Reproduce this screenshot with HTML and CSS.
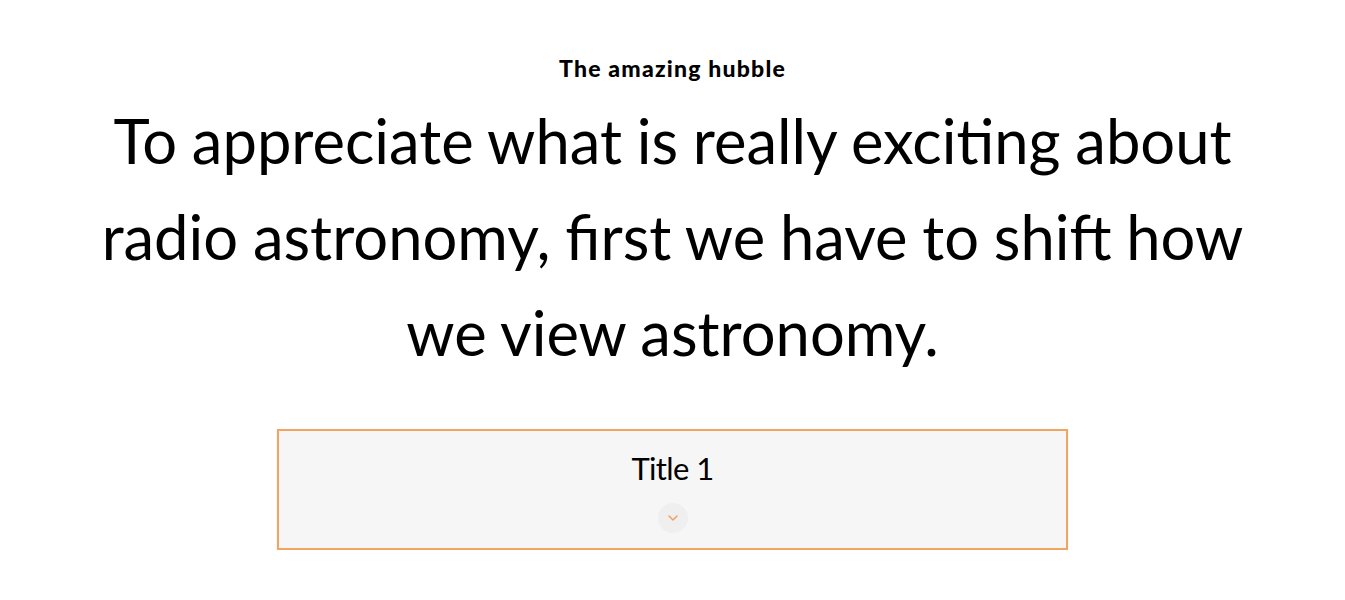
FILE: index.html
```html
<!DOCTYPE html>
<html>
<head>
<meta charset="utf-8">
<link rel="stylesheet" href="styles.css">
</head>
<body>
<section class="hero">
  <h6 class="eyebrow">The amazing hubble</h6>
  <h2 class="headline">To appreciate what is really exciting about<br>radio astronomy, first we have to shift how<br>we view astronomy.</h2>
  <div class="accordion">
    <div class="acc-item">
      <div class="acc-title">Title 1</div>
      <span class="acc-toggle">
        <svg width="10" height="6" viewBox="0 0 10 6"><path d="M1 1l4 4 4-4" fill="none" stroke="#f2a05e" stroke-width="1.5" stroke-linecap="round" stroke-linejoin="round"/></svg>
      </span>
    </div>
  </div>
</section>
</body>
</html>
```
FILE: styles.css
```css
html, body { margin: 0; padding: 0; background: #fff; }
body { font-family: "Lato", "Liberation Sans", sans-serif; color: #000; }
.hero { display: flex; flex-direction: column; align-items: center; padding-top: 52px; }
.eyebrow { margin: 0; font-size: 23px; font-weight: 900; line-height: 32px; letter-spacing: 1.2px; }
.headline { margin: 8px 0 0; font-size: 61.5px; font-weight: 400; line-height: 96px; text-align: center; word-spacing: -1px; }
.accordion { margin-top: 49px; width: 791px; }
.acc-item { box-sizing: border-box; border: 2px solid #f2a561; background: #f6f6f6; height: 121px; display: flex; flex-direction: column; align-items: center; padding-top: 16px; box-shadow: 0 1px 1px rgba(0,0,0,0.15); }
.acc-title { font-size: 31px; line-height: 42px; letter-spacing: -0.6px; }
.acc-toggle { margin-top: 14px; width: 30px; height: 30px; border-radius: 50%; background: #efefef; display: flex; align-items: center; justify-content: center; }
```
